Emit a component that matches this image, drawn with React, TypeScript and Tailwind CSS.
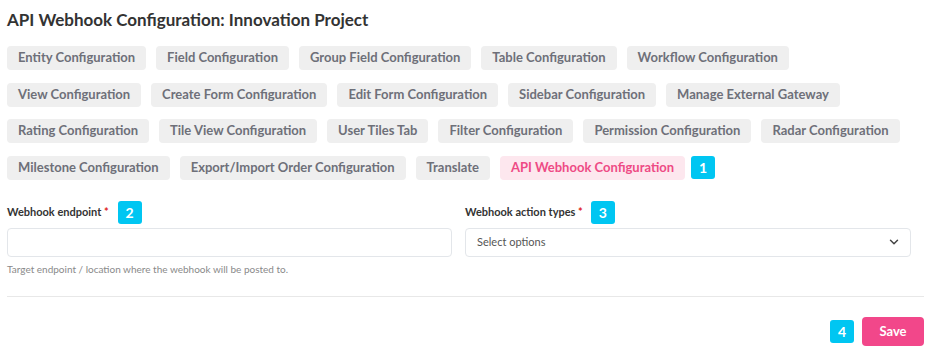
import { ChevronDown } from 'lucide-react';

const rows: string[][] = [
  ['Entity Configuration', 'Field Configuration', 'Group Field Configuration', 'Table Configuration', 'Workflow Configuration'],
  ['View Configuration', 'Create Form Configuration', 'Edit Form Configuration', 'Sidebar Configuration', 'Manage External Gateway'],
  ['Rating Configuration', 'Tile View Configuration', 'User Tiles Tab', 'Filter Configuration', 'Permission Configuration', 'Radar Configuration'],
  ['Milestone Configuration', 'Export/Import Order Configuration', 'Translate', 'API Webhook Configuration'],
];

const ACTIVE = 'API Webhook Configuration';

function Marker({ n, className = '' }: { n: number; className?: string }) {
  return (
    <span className={`inline-flex h-[23px] w-[24px] items-center justify-center rounded-[3px] bg-[#00c6f2] text-[14px] font-bold text-white ${className}`}>
      {n}
    </span>
  );
}

export default function App() {
  return (
    <div className="h-[360px] w-[936px] bg-white px-[7px] pt-[9px] text-[#333]" style={{ fontFamily: 'Lato, "Noto Sans", sans-serif' }}>
      <h1 className="text-[17px] font-bold leading-[22px] text-[#333]">API Webhook Configuration: Innovation Project</h1>

      {/* Tabs */}
      <div className="mt-[15px] flex flex-col gap-[12.6px]">
        {rows.map((row, i) => (
          <div key={i} className="flex items-center gap-[10px]">
            {row.map((label) => (
              <button
                key={label}
                className={
                  label === ACTIVE
                    ? 'h-[24px] rounded-[4px] bg-[#fde7ee] px-[11px] text-[13px] font-bold text-[#ee4b85]'
                    : 'h-[24px] rounded-[4px] bg-[#efefef] px-[11px] text-[13px] font-bold text-[#6e7079]'
                }
              >
                {label}
              </button>
            ))}
            {i === 3 && <Marker n={1} className="-ml-[4px]" />}
          </div>
        ))}
      </div>

      {/* Form */}
      <div className="mt-[21px] grid grid-cols-[445px_446px] gap-[13px]">
        <div>
          <div className="flex h-[23px] items-center gap-[9px]">
            <span className="text-[11px] font-bold text-[#333]">
              Webhook endpoint <span className="text-[#e02020]">*</span>
            </span>
            <Marker n={2} />
          </div>
          <input className="mt-[4px] h-[29px] w-full rounded-[4px] border border-[#e3e6ea] px-[10px] text-[11px] outline-none" />
          <p className="mt-[5px] text-[10px] text-[#8a8a8a]">Target endpoint / location where the webhook will be posted to.</p>
        </div>
        <div>
          <div className="flex h-[23px] items-center gap-[8px]">
            <span className="text-[11px] font-bold text-[#333]">
              Webhook action types <span className="text-[#e02020]">*</span>
            </span>
            <Marker n={3} />
          </div>
          <div className="mt-[4px] flex h-[29px] w-full items-center justify-between rounded-[4px] border border-[#e3e6ea] pl-[11px] pr-[9px]">
            <span className="text-[11px] text-[#555]">Select options</span>
            <ChevronDown className="h-[14px] w-[14px] text-[#444]" strokeWidth={2.5} />
          </div>
        </div>
      </div>

      <div className="mt-[19px] mr-[5px] border-t border-[#e8e8e8]" />

      <div className="mt-[20px] mr-[5px] flex items-center justify-end gap-[8px]">
        <Marker n={4} />
        <button className="h-[29px] w-[62px] rounded-[4px] bg-[#f2478a] text-[13px] font-bold text-white">Save</button>
      </div>
    </div>
  );
}
